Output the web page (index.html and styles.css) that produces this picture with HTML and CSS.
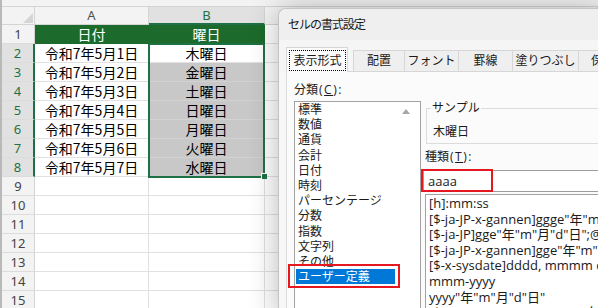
FILE: index.html
```html
<!DOCTYPE html>
<html lang="ja">
<head>
<meta charset="utf-8">
<title>セルの書式設定</title>
<link rel="stylesheet" href="styles.css">
</head>
<body>
<div class="screen">
  <div class="sheet">
    <div class="topstrip"></div>
    <div class="grid">
      <div class="corner"><span class="tri"></span></div>
      <div class="ch">A</div>
      <div class="ch sel">B</div>
      <div class="ch"></div>

      <div class="rh">1</div><div class="c th">日付</div><div class="c th">曜日</div><div class="c"></div>
      <div class="rh hl">2</div><div class="c">令和7年5月1日</div><div class="c">木曜日</div><div class="c"></div>
      <div class="rh hl">3</div><div class="c">令和7年5月2日</div><div class="c sb">金曜日</div><div class="c"></div>
      <div class="rh hl">4</div><div class="c">令和7年5月3日</div><div class="c sb">土曜日</div><div class="c"></div>
      <div class="rh hl">5</div><div class="c">令和7年5月4日</div><div class="c sb">日曜日</div><div class="c"></div>
      <div class="rh hl">6</div><div class="c">令和7年5月5日</div><div class="c sb">月曜日</div><div class="c"></div>
      <div class="rh hl">7</div><div class="c">令和7年5月6日</div><div class="c sb">火曜日</div><div class="c"></div>
      <div class="rh hl">8</div><div class="c">令和7年5月7日</div><div class="c sb">水曜日</div><div class="c"></div>
      <div class="rh">9</div><div class="c"></div><div class="c"></div><div class="c"></div>
      <div class="rh">10</div><div class="c"></div><div class="c"></div><div class="c"></div>
      <div class="rh">11</div><div class="c"></div><div class="c"></div><div class="c"></div>
      <div class="rh">12</div><div class="c"></div><div class="c"></div><div class="c"></div>
      <div class="rh">13</div><div class="c"></div><div class="c"></div><div class="c"></div>
      <div class="rh">14</div><div class="c"></div><div class="c"></div><div class="c"></div>
      <div class="rh">15</div><div class="c"></div><div class="c"></div><div class="c"></div>
    </div>
    <div class="selection"><span class="handle"></span></div>
  </div>

  <div class="dialog">
    <div class="titlebar">セルの書式設定</div>
    <div class="tabstrip">
      <div class="tab active"><span class="focus">表示形式</span></div>
      <div class="tab t-haichi">配置</div>
      <div class="tab t-font">フォント</div>
      <div class="tab t-keisen">罫線</div>
      <div class="tab t-nuri">塗りつぶし</div>
      <div class="tab t-hogo">保護</div>
    </div>
    <div class="panel">
      <div class="leftcol">
        <div class="label">分類<span class="acc">(<u>C</u>):</span></div>
        <div class="catlist">
          <div class="items">
            <div class="item">標準</div>
            <div class="item">数値</div>
            <div class="item">通貨</div>
            <div class="item">会計</div>
            <div class="item">日付</div>
            <div class="item">時刻</div>
            <div class="item">パーセンテージ</div>
            <div class="item">分数</div>
            <div class="item">指数</div>
            <div class="item">文字列</div>
            <div class="item">その他</div>
            <div class="item sel">ユーザー定義</div>
          </div>
          <div class="scroll"><span class="up"></span></div>
        </div>
      </div>
      <div class="rightcol">
        <div class="sample">
          <span class="sample-label">サンプル</span>
          <div class="sample-value">木曜日</div>
        </div>
        <div class="kind-label">種類<span class="acc">(<u>T</u>):</span></div>
        <div class="input">aaaa</div>
        <div class="fmtlist">
          <div class="fmt">[h]:mm:ss</div>
          <div class="fmt">[$-ja-JP-x-gannen]ggge"年"m"月"d"日";@</div>
          <div class="fmt">[$-ja-JP]gge"年"m"月"d"日";@</div>
          <div class="fmt">[$-ja-JP-x-gannen]gge"年"m"月"d"日";@</div>
          <div class="fmt">[$-x-sysdate]dddd, mmmm dd, yyyy</div>
          <div class="fmt">mmm-yyyy</div>
          <div class="fmt">yyyy"年"m"月"d"日"</div>
          <div class="fmt">[$-ja-JP-x-gannen,80]ggge"年"m"月"d"日"</div>
        </div>
      </div>
    </div>
    <div class="mark mark-cat"></div>
    <div class="mark mark-input"></div>
  </div>
</div>
</body>
</html>
```

FILE: styles.css
```css
* { box-sizing: border-box; }
html, body { margin: 0; padding: 0; }
body {
  width: 598px;
  height: 308px;
  overflow: hidden;
  background: #ffffff;
  font-family: "Noto Sans CJK JP", sans-serif;
}
.screen {
  position: relative;
  width: 598px;
  height: 308px;
  overflow: hidden;
}

/* ---------- spreadsheet ---------- */
.sheet {
  position: relative;
  height: 100%;
  border-left: 2px solid #b9b9b9;
  background: #ffffff;
}
.topstrip {
  height: 7px;
  background: #f3f3f3;
  border-bottom: 1px solid #d4d4d4;
}
.grid {
  display: grid;
  grid-template-columns: 33px 114px 116px 1fr;
  grid-template-rows: 18px;
  grid-auto-rows: 19px;
}
.corner {
  position: relative;
  background: #f3f3f3;
  border-right: 1px solid #d4d4d4;
  border-bottom: 1px solid #d4d4d4;
}
.tri {
  position: absolute;
  right: 1px;
  bottom: 1px;
  width: 0;
  height: 0;
  border-left: 10px solid transparent;
  border-bottom: 10px solid #d5d5d5;
}
.ch {
  background: #f3f3f3;
  border-right: 1px solid #d4d4d4;
  border-bottom: 1px solid #d4d4d4;
  color: #505050;
  font: 13px/17px "Noto Sans", sans-serif;
  text-align: center;
}
.ch.sel {
  background: #e1e1e1;
  color: #1e7145;
  border-bottom: 2px solid #1e7145;
}
.rh {
  background: #f3f3f3;
  border-right: 1px solid #d4d4d4;
  border-bottom: 1px solid #dcdcdc;
  color: #444444;
  font: 13px/18px "Noto Sans", sans-serif;
  text-align: center;
}
.rh.hl {
  background: #e1e1e1;
  color: #1e7145;
  border-right: 2px solid #1e7145;
}
.c {
  border-right: 1px solid #e1e1e1;
  border-bottom: 1px solid #e1e1e1;
  font-size: 14px;
  line-height: 18px;
  text-align: center;
  color: #000000;
  white-space: nowrap;
}
.c.th {
  background: #1d6b2c;
  border-color: #1d6b2c;
  color: #ffffff;
}
.c.sb {
  background: #c8c8c8;
  border-bottom-color: #d2d2d2;
}
.selection {
  position: absolute;
  left: 146px;
  top: 43px;
  width: 117px;
  height: 135px;
  border: 2px solid #1e7145;
}
.handle {
  position: absolute;
  right: -4px;
  bottom: -3px;
  width: 6px;
  height: 6px;
  background: #1e7145;
  border-left: 1px solid #ffffff;
  border-top: 1px solid #ffffff;
}

/* ---------- dialog ---------- */
.dialog {
  position: absolute;
  left: 278px;
  top: 8px;
  width: 330px;
  height: 310px;
  display: flex;
  flex-direction: column;
  background: #f7f7f7;
  border-top: 1px solid #c4c4c4;
  border-left: 1px solid #c4c4c4;
  border-top-left-radius: 8px;
  box-shadow: 0 0 30px rgba(0, 0, 0, 0.28);
  font-family: "Open Sans", "Noto Sans CJK JP", sans-serif;
  font-size: 12px;
  color: #1a1a1a;
}
.titlebar {
  flex: none;
  height: 31px;
  line-height: 31px;
  padding-left: 9px;
  background: #efefef;
  border-top-left-radius: 8px;
  letter-spacing: -1px;
  white-space: nowrap;
}
.tabstrip {
  flex: none;
  height: 31px;
  display: flex;
  align-items: flex-end;
  padding-left: 7px;
  background: #f5f5f5;
  white-space: nowrap;
}
.tab {
  flex: none;
  height: 21px;
  line-height: 20px;
  border: 1px solid #d6d6d6;
  border-bottom: none;
  background: #efefef;
  text-align: center;
  margin-left: -1px;
}
.tab.active {
  position: relative;
  z-index: 1;
  width: 62px;
  height: 25px;
  margin-left: 0;
  margin-bottom: -1px;
  padding: 2px 1px 0 2px;
  background: #fbfbfb;
}
.focus {
  display: block;
  width: 57px;
  height: 21px;
  line-height: 19px;
  border: 1px dotted #000000;
  text-align: center;
}
.t-haichi { width: 52px; margin-left: 5px; }
.t-font { width: 55px; }
.t-keisen { width: 55px; }
.t-nuri { width: 67px; }
.t-hogo { width: 50px; }

.panel {
  flex: 1 1 auto;
  min-height: 0;
  overflow: hidden;
  display: flex;
  margin-left: 7px;
  padding: 10px 0 0 7px;
  border-top: 1px solid #d6d6d6;
  border-left: 1px solid #dedede;
  background: #fbfbfb;
  min-width: 0;
}
.leftcol {
  flex: none;
  width: 127px;
  display: flex;
  flex-direction: column;
}
.label, .kind-label {
  flex: none;
  height: 16px;
  line-height: 16px;
  white-space: nowrap;
}
.acc { letter-spacing: 1.5px; padding-left: 1px; }
.catlist {
  flex: none;
  margin-top: 3px;
  height: 230px;
  display: flex;
  border: 1px solid #a2a2a2;
  background: #ffffff;
}
.items {
  flex: 1;
  padding: 0 1px;
}
.item {
  height: 15.2px;
  line-height: 15.2px;
  padding-left: 2px;
  white-space: nowrap;
}
.item.sel {
  background: #0078d7;
  color: #ffffff;
}
.scroll {
  flex: none;
  width: 24px;
  position: relative;
}
.up {
  position: absolute;
  left: 6px;
  top: 7px;
  width: 0;
  height: 0;
  border-left: 4px solid transparent;
  border-right: 4px solid transparent;
  border-bottom: 5px solid #a6a6a6;
}
.rightcol {
  flex: 1;
  min-width: 0;
  margin-left: 2px;
  display: flex;
  flex-direction: column;
}
.sample {
  flex: none;
  position: relative;
  margin: 26px 0 0 3px;
  height: 36px;
  border: 1px solid #dcdcdc;
  border-right: none;
}
.sample-label {
  position: absolute;
  top: -9px;
  left: 4px;
  padding: 0 1px;
  line-height: 16px;
  background: #fbfbfb;
}
.sample-value {
  padding: 15px 0 0 6px;
  line-height: 16px;
}
.kind-label {
  margin-top: 5px;
  padding-left: 2px;
}
.input {
  flex: none;
  margin-top: 5px;
  height: 22px;
  padding-left: 4px;
  border: 1px solid #9c9c9c;
  border-right: none;
  background: #ffffff;
  font-size: 13px;
  line-height: 20px;
}
.fmtlist {
  flex: none;
  margin: 2px 0 0 2px;
  height: 200px;
  padding: 1px 0 0 3px;
  border: 1px solid #a2a2a2;
  border-right: none;
  background: #ffffff;
  overflow: hidden;
  font-size: 13px;
  line-height: 15.6px;
}
.fmt { white-space: nowrap; height: 15.6px; }

.mark {
  position: absolute;
  border: 2px solid #e4181e;
}
.mark-cat {
  left: 9px;
  top: 255px;
  width: 112px;
  height: 24px;
}
.mark-input {
  left: 142px;
  top: 160px;
  width: 72px;
  height: 23px;
}
```
